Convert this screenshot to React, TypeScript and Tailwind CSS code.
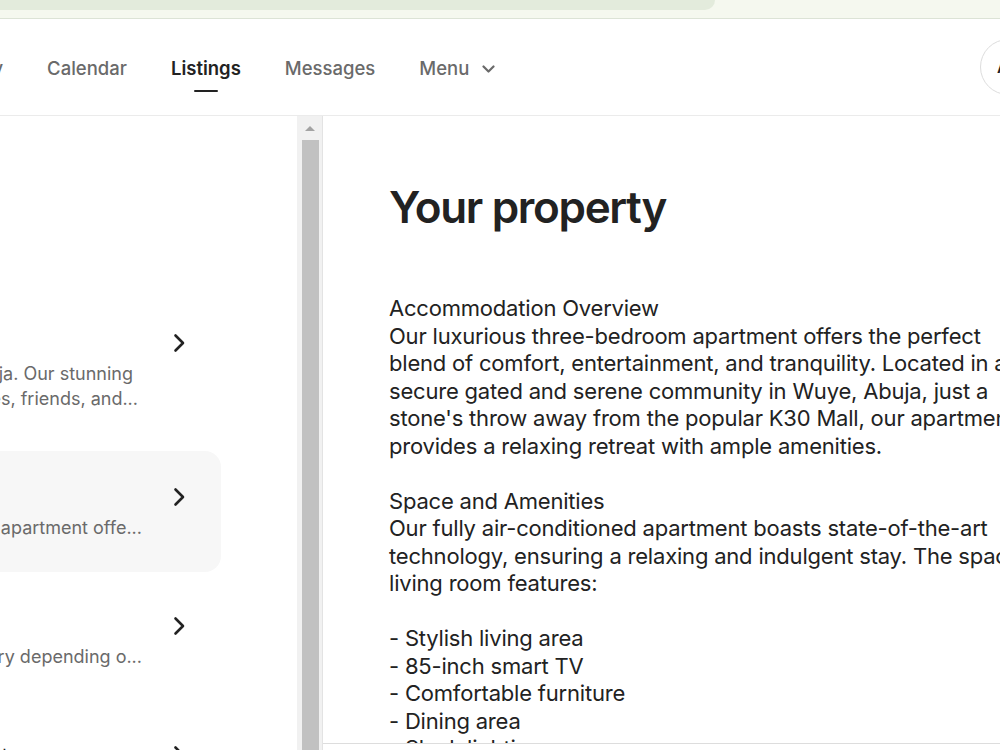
import React from 'react';

const Chevron: React.FC = () => (
  <svg width="12" height="20" viewBox="0 0 12 20" fill="none" className="shrink-0">
    <path d="M2.5 2.5 10 10l-7.5 7.5" stroke="#222222" strokeWidth="2.6" strokeLinecap="round" strokeLinejoin="round" />
  </svg>
);

type Row = {
  title: string;
  lines: { text: string; pad: string }[];
  active?: boolean;
};

const rows: Row[] = [
  {
    title: 'Listing description',
    lines: [
      { text: 'Welcome to your home away from home in Abuja. Our stunning', pad: 'pr-[13px]' },
      { text: 'apartment is perfect for families, friends, and...', pad: 'pr-[8px]' },
    ],
  },
  {
    title: 'Your property',
    lines: [{ text: 'Accommodation Overview Our luxurious three-bedroom apartment offe...', pad: 'pr-[4px]' }],
    active: true,
  },
  {
    title: 'Guest access',
    lines: [{ text: 'Guests have access to the entire apartment. Check-in times may vary depending o...', pad: 'pr-[4px]' }],
  },
  {
    title: 'Interaction with guests',
    lines: [{ text: 'We are available by phone and message throughout your stay...', pad: 'pr-[4px]' }],
  },
];

const body: string[] = [
  'Accommodation Overview',
  'Our luxurious three-bedroom apartment offers the perfect',
  'blend of comfort, entertainment, and tranquility. Located in a',
  'secure gated and serene community in Wuye, Abuja, just a',
  "stone's throw away from the popular K30 Mall, our apartment",
  'provides a relaxing retreat with ample amenities.',
  '',
  'Space and Amenities',
  'Our fully air-conditioned apartment boasts state-of-the-art',
  'technology, ensuring a relaxing and indulgent stay. The spacious',
  'living room features:',
  '',
  '- Stylish living area',
  '- 85-inch smart TV',
  '- Comfortable furniture',
  '- Dining area',
  '- Sleek lighting',
];

const navItems = ['Today', 'Calendar', 'Listings', 'Messages'];

export default function App() {
  return (
    <div className="w-[1000px] h-[750px] overflow-hidden bg-white flex flex-col font-['Inter',sans-serif] text-[#222222]">
      {/* browser strip */}
      <div className="h-[19px] shrink-0 bg-[#f5f8ef] border-b border-[#dce3d6]">
        <div className="h-[10px] w-[715px] bg-[#e3ebdc] rounded-br-[10px]" />
      </div>

      {/* top nav */}
      <header className="h-[97px] shrink-0 border-b border-[#ebebeb] flex items-center justify-between overflow-hidden">
        <nav className="flex items-center -ml-[73px] pt-[3px] text-[18.5px] font-medium text-[#6a6a6a]">
          {navItems.map((item) => (
            <a
              key={item}
              className={`relative px-[22px] ${item === 'Listings' ? 'text-[#222222] font-semibold' : ''}`}
            >
              {item}
              {item === 'Listings' && (
                <span className="absolute left-1/2 -translate-x-1/2 top-[35px] h-[2px] w-[24px] bg-[#222222] rounded" />
              )}
            </a>
          ))}
          <a className="flex items-center gap-[13px] px-[22px]">
            Menu
            <svg width="13" height="8" viewBox="0 0 13 8" fill="none">
              <path d="M1.5 1.5 6.5 6.5l5-5" stroke="#6a6a6a" strokeWidth="2.2" strokeLinecap="round" strokeLinejoin="round" />
            </svg>
          </a>
        </nav>
        <div className="w-[56px] h-[56px] -mr-[36px] rounded-full border border-[#dddddd] flex items-center pl-[16px] shrink-0">
          <span className="text-[16px] font-semibold leading-none">A</span>
        </div>
      </header>

      <div className="flex flex-1 min-h-0">
        {/* list of sections */}
        <aside className="w-[297px] shrink-0 overflow-hidden pt-[181px] pr-[76px]">
          <div className="flex flex-col gap-2 -ml-[200px]">
            {rows.map((row) => (
              <div
                key={row.title}
                className={`flex items-start gap-[27px] py-8 pl-6 pr-[36px] rounded-2xl ${row.active ? 'bg-[#f7f7f7]' : ''}`}
              >
                <div className="flex-1 min-w-0 overflow-hidden">
                  <div className="text-[18px] leading-[28px] whitespace-nowrap">{row.title}</div>
                  <div className="mt-1 text-[18px] leading-[25px] text-[#6a6a6a]">
                    {row.lines.map((l) => (
                      <div key={l.text} className={`flex justify-end ${l.pad}`}>
                        <span className="whitespace-nowrap">{l.text}</span>
                      </div>
                    ))}
                  </div>
                </div>
                <div className="h-[28px] flex items-center">
                  <Chevron />
                </div>
              </div>
            ))}
          </div>
        </aside>

        {/* scrollbar */}
        <div className="w-[25px] shrink-0 bg-[#f1f1f1] flex flex-col items-center pl-[1px]">
          <div className="h-[24px] flex items-center justify-center">
            <div className="w-0 h-0 border-l-[5px] border-r-[5px] border-b-[5px] border-l-transparent border-r-transparent border-b-[#a3a3a3]" />
          </div>
          <div className="w-[17px] flex-1 bg-[#c1c1c1]" />
        </div>

        {/* editor panel */}
        <main className="flex-1 min-w-0 border-l border-[#e3e3e3] flex flex-col">
          <div className="flex-1 min-h-0 overflow-hidden pl-[66px] pt-[65px]">
            <h1 className="text-[44px] leading-[52px] font-semibold tracking-[-0.03em] text-[#222222]">Your property</h1>
            <div className="mt-[62px] text-[22px] leading-[27.5px] tracking-[-0.2px] text-[#222222]">
              {body.map((line, i) => (
                <div key={i} className="whitespace-nowrap h-[27.5px]">
                  {line}
                </div>
              ))}
            </div>
          </div>
          <div className="h-[7px] shrink-0 border-t border-[#dddddd] bg-white" />
        </main>
      </div>
    </div>
  );
}
